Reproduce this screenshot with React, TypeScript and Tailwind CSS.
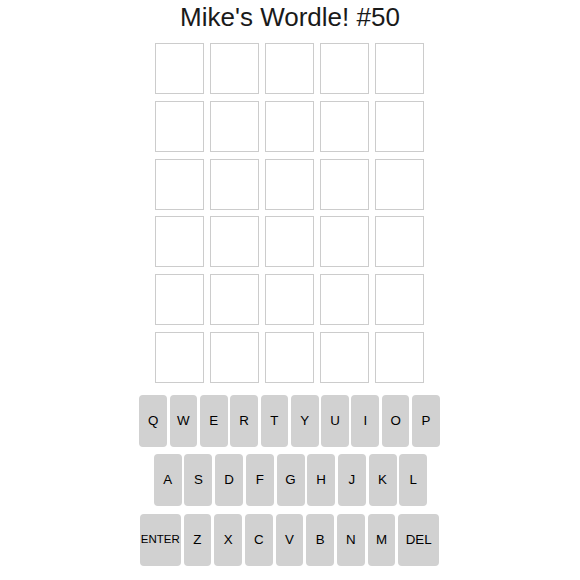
const ROW1 = ['Q', 'W', 'E', 'R', 'T', 'Y', 'U', 'I', 'O', 'P'];
const ROW2 = ['A', 'S', 'D', 'F', 'G', 'H', 'J', 'K', 'L'];
const ROW3 = ['Z', 'X', 'C', 'V', 'B', 'N', 'M'];

function Key({ label, wide, small, w }: { label: string; wide?: boolean; small?: boolean; w?: string }) {
  return (
    <div
      className={`${wide ? 'w-[40.5px]' : w ?? 'w-[27.7px]'} h-[52px] shrink-0 rounded-[4px] bg-[#d1d1d1] flex items-center justify-center text-black ${small ? 'text-[11.5px]' : 'text-[13.333px]'}`}
    >
      {label}
    </div>
  );
}

export default function App() {
  const rows = Array.from({ length: 6 });
  const cols = Array.from({ length: 5 });
  return (
    <div className="w-[580px] h-[580px] bg-white flex flex-col items-center" style={{ fontFamily: '"Liberation Sans", Arial, sans-serif' }}>
      <h1 className="pt-[1.5px] text-[26px] leading-[30px] text-[#1a1a1a] font-normal">Mike's Wordle! #50</h1>
      <div className="mt-[11.5px] ml-[-1px] flex flex-col gap-y-[6.8px]">
        {rows.map((_, r) => (
          <div key={r} className="flex gap-x-[6px]">
            {cols.map((_, c) => (
              <div key={c} className="w-[49px] h-[51px] border border-[#cccccc] bg-white" />
            ))}
          </div>
        ))}
      </div>
      <div className="mt-[12px] ml-[-1px] flex flex-col items-center gap-y-[7.5px]">
        <div className="flex gap-x-[2.63px]">
          {ROW1.map((k) => (
            <Key key={k} label={k} />
          ))}
        </div>
        <div className="flex gap-x-[2.7px] ml-[2px]">
          {ROW2.map((k) => (
            <Key key={k} label={k} w="w-[28px]" />
          ))}
        </div>
        <div className="flex gap-x-[3px]">
          <Key label="ENTER" wide small />
          {ROW3.map((k) => (
            <Key key={k} label={k} />
          ))}
          <Key label="DEL" wide />
        </div>
      </div>
    </div>
  );
}
